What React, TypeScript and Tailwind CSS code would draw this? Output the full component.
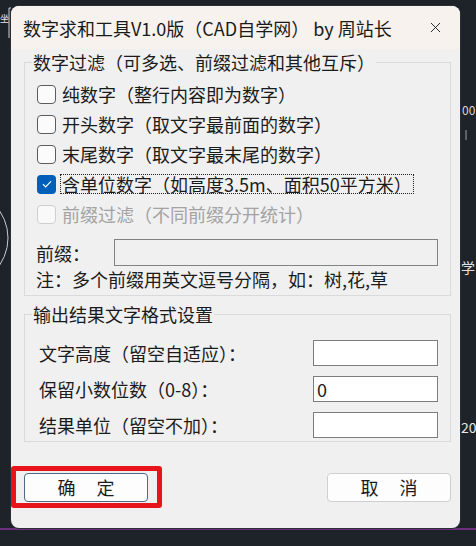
import { X } from 'lucide-react'

interface CheckRowProps {
  label: string
  checked?: boolean
  disabled?: boolean
  focused?: boolean
}

function CheckRow({ label, checked, disabled, focused }: CheckRowProps) {
  return (
    <div className="flex h-[30px] items-center">
      {checked ? (
        <span className="flex h-[19px] w-[19px] items-center justify-center rounded-[4px] bg-[#005fb8]">
          <svg width="12" height="12" viewBox="0 0 12 12" fill="none">
            <path d="M2 6.2l2.6 2.6L10 3.4" stroke="#fff" strokeWidth="1.2" />
          </svg>
        </span>
      ) : (
        <span
          className={
            disabled
              ? 'h-[19px] w-[19px] rounded-[4px] border border-[#cfcfcf] bg-[#f9f9f9]'
              : 'h-[19px] w-[19px] rounded-[4px] border border-[#5c5c5c] bg-[#fbfbfb]'
          }
        />
      )}
      <span
        className={
          focused
            ? 'ml-[4px] border border-dotted border-[#222] px-[1px] leading-[18px] text-[#1b1b1b]'
            : disabled
              ? 'ml-[6px] leading-[20px] text-[#a3a3a3]'
              : 'ml-[6px] leading-[20px] text-[#1b1b1b]'
        }
      >
        {label}
      </span>
    </div>
  )
}

function FieldRow({ label, value }: { label: string; value?: string }) {
  return (
    <div className="flex h-[26px] items-center justify-between">
      <span className="ml-[1px] leading-[20px] text-[#1b1b1b]">{label}</span>
      <div className="flex h-[26px] w-[125px] items-center border border-[#7d7d7d] bg-white px-[3px] leading-[20px] text-[#1b1b1b]">
        {value}
      </div>
    </div>
  )
}

export default function App() {
  return (
    <div className="relative h-[546px] w-[476px] overflow-hidden bg-[#1e2229] font-['Noto_Sans_CJK_SC',sans-serif] text-[18px]">
      {/* CAD drawing behind the dialog */}
      <svg className="absolute inset-0" width="476" height="546" viewBox="0 0 476 546" fill="none">
        <path d="M9 8v30M9 8h2" stroke="#cfd3d8" strokeWidth="1" />
        <path d="M-40 190a48 48 0 0 1 48 48a48 48 0 0 1-48 48" stroke="#c8ccd2" strokeWidth="1" />
        <path d="M466 130v10" stroke="#9aa0a8" strokeWidth="1" />
        <path d="M0 529h476" stroke="#6e2f7e" strokeWidth="2" />
      </svg>
      <span className="absolute left-[0px] top-[14px] text-[9px] leading-none text-[#e6e6e6]">坐</span>
      <span className="absolute left-[462px] top-[104px] text-[12px] leading-none text-[#d8d8d8]">00</span>
      <span className="absolute left-[461px] top-[260px] text-[14px] leading-none text-[#e0e0e0]">学</span>
      <span className="absolute left-[461px] top-[420px] text-[14px] leading-none text-[#e8e8e8]">20</span>

      {/* dialog window */}
      <div className="absolute left-[11px] top-[6px] flex h-[522px] w-[449px] flex-col overflow-hidden rounded-[8px] bg-[#f0f0f0] shadow-[0_0_0_1px_#2a2e35]">
        <div className="flex h-[43px] shrink-0 items-center justify-between bg-[#f7f2ee] pl-[12px] pr-[16px]">
          <span className="text-[18px] leading-[22px] text-[#1a1a1a]">数字求和工具V1.0版（CAD自学网） by 周站长</span>
          <X size={17} strokeWidth={1.3} color="#1a1a1a" />
        </div>

        <div className="flex flex-1 flex-col pl-[13px] pr-[9px]">
          <div className="relative mt-[13px] h-[234px] border border-[#dadada] pl-[12px] pr-[12px] pt-[16px]">
            <span className="absolute left-[7px] top-[-11px] bg-[#f0f0f0] px-[1px] leading-[20px] text-[#1b1b1b]">
              数字过滤（可多选、前缀过滤和其他互斥）
            </span>
            <CheckRow label="纯数字（整行内容即为数字）" />
            <CheckRow label="开头数字（取文字最前面的数字）" />
            <CheckRow label="末尾数字（取文字最末尾的数字）" />
            <CheckRow label="含单位数字（如高度3.5m、面积50平方米）" checked focused />
            <CheckRow label="前缀过滤（不同前缀分开统计）" disabled />
            <div className="mt-[10px] flex h-[27px] items-center justify-between">
              <span className="ml-[-1px] leading-[20px] text-[#1b1b1b]">前缀：</span>
              <div className="h-[27px] w-[324px] border border-[#828282] bg-[#f0f0f0]" />
            </div>
            <div className="ml-[-1px] mt-[3px] leading-[20px] text-[#1b1b1b]">注：多个前缀用英文逗号分隔，如：树,花,草</div>
          </div>

          <div className="relative mt-[18px] flex h-[128px] flex-col gap-[10px] border border-[#dadada] pl-[13px] pr-[12px] pt-[25px]">
            <span className="absolute left-[7px] top-[-11px] bg-[#f0f0f0] px-[1px] leading-[20px] text-[#1b1b1b]">
              输出结果文字格式设置
            </span>
            <FieldRow label="文字高度（留空自适应）：" />
            <FieldRow label="保留小数位数（0-8）：" value="0" />
            <FieldRow label="结果单位（留空不加）：" />
          </div>

          <div className="mt-[31px] flex items-center justify-between">
            <div className="relative">
              <button className="flex h-[29px] w-[124px] items-center justify-center gap-[21px] rounded-[4px] border border-[#4a6a88] bg-[#fdfdfd] text-[#1b1b1b]">
                <span>确</span>
                <span>定</span>
              </button>
              <div className="absolute left-[-13px] top-[-7px] h-[42px] w-[151px] rounded-[3px] border-[5px] border-[#e8141b]" />
            </div>
            <button className="flex h-[29px] w-[124px] items-center justify-center gap-[21px] rounded-[4px] border border-[#cfcfcf] bg-[#fdfdfd] text-[#1b1b1b]">
              <span>取</span>
              <span>消</span>
            </button>
          </div>
        </div>
      </div>
    </div>
  )
}
